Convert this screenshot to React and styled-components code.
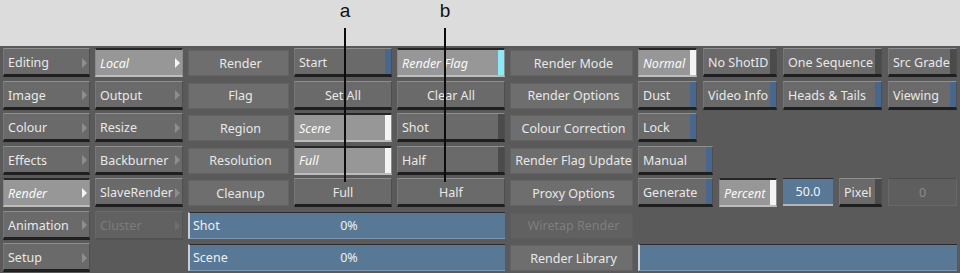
import React from "react";
import styled, { createGlobalStyle, css } from "styled-components";

const Global = createGlobalStyle`
  body { margin: 0; background: #dcdcdc; font-family: "Noto Sans", "DejaVu Sans", sans-serif; }
`;

const Page = styled.div`
  position: relative;
  width: 960px;
  height: 273px;
  display: flex;
  flex-direction: column;
  background: #dcdcdc;
  overflow: hidden;
`;

const Header = styled.div`
  height: 46px;
  flex: none;
`;

const Panel = styled.div`
  flex: 1;
  background: #5a5a5a;
  display: grid;
  grid-template-columns: 87px 88px 101px 98px 108px 123px 319px;
  grid-auto-rows: 30px;
  column-gap: 5px;
  row-gap: 2.5px;
  padding: 2px 3px 0;
`;

// callout letters + leader lines drawn over the screenshot
const Callout = styled.div`
  position: absolute;
  left: ${p => p.$x}px;
  top: 0;
  width: 2px;
  height: 182px;
  pointer-events: none;
`;

const CalloutLetter = styled.span`
  position: absolute;
  left: 50%;
  top: 1px;
  transform: translateX(-50%);
  font-family: "Liberation Sans", Arial, sans-serif;
  font-size: 19px;
  line-height: 20px;
  color: #111;
`;

const CalloutLine = styled.div`
  position: absolute;
  left: 0;
  top: 28px;
  bottom: 0;
  width: 2px;
  background: #0c0c0c;
`;

const looks = {
  raised: css`
    padding-top: 2px;
    background: #6a6a6a;
    border-top: 1px solid #8e8e8e;
    border-left: 1px solid #767676;
    border-right: 1px solid #4e4e4e;
    border-bottom: 3px solid #1f1f1f;
    color: #e8e8e8;
  `,
  pressed: css`
    padding-top: 1px;
    background: #979797;
    border-top: 2px solid #262626;
    border-left: 1px solid #8a8a8a;
    border-right: 1px solid #8a8a8a;
    border-bottom: 2px solid #bdbdbd;
    color: #fafafa;
    font-style: italic;
  `,
  dim: css`
    padding-top: 2px;
    background: #616161;
    border-top: 1px solid #6c6c6c;
    border-left: 1px solid #666;
    border-right: 1px solid #555;
    border-bottom: 2px solid #525252;
    color: #7c7c7c;
  `,
  flat: css`
    height: 26px;
    margin-top: 2px;
    background: #6e6e6e;
    border: 1px solid #636363;
    color: #e8e8e8;
    justify-content: center;
  `,
  flatOff: css`
    height: 26px;
    margin-top: 2px;
    background: #616161;
    border: 1px solid #5d5d5d;
    color: #7e7e7e;
    justify-content: center;
  `,
};

const Btn = styled.div`
  box-sizing: border-box;
  height: 29px;
  width: ${p => (p.$w ? `${p.$w}px` : "auto")};
  flex: none;
  display: flex;
  align-items: center;
  justify-content: ${p => (p.$center ? "center" : "flex-start")};
  padding-left: ${p => (p.$center ? 0 : 4)}px;
  font-size: 12.5px;
  white-space: nowrap;
  overflow: hidden;
  ${p => looks[p.$look || "raised"]}
`;

const Label = styled.span`
  flex: none;
`;

const Lamp = styled.span`
  align-self: stretch;
  width: 6px;
  flex: none;
  margin-left: auto;
  margin-top: -2px;
  background: ${p => p.$c};
`;

const Arrow = styled.span`
  flex: none;
  margin-left: auto;
  margin-right: 2px;
  width: 0;
  height: 0;
  border-top: 5px solid transparent;
  border-bottom: 5px solid transparent;
  border-left: 5px solid ${p => (p.$on ? "#f4f4f4" : p.$off ? "#6e6e6e" : "#8e8e8e")};
`;

const Bar = styled.div`
  grid-column: ${p => p.$cols};
  box-sizing: border-box;
  height: 27px;
  margin-top: 1px;
  display: grid;
  grid-template-columns: 1fr auto 1fr;
  align-items: center;
  padding-left: 3px;
  background: #587896;
  border-left: 2px solid #c9d0d6;
  border-top: 1px solid #2b2b2b;
  border-bottom: 1px solid #7f97ae;
  color: #eef0f2;
  font-size: 12.5px;
`;

const Field = styled.div`
  box-sizing: border-box;
  width: ${p => p.$w}px;
  flex: none;
  height: 28px;
  display: flex;
  align-items: center;
  justify-content: center;
  font-size: 12.5px;
  ${p =>
    p.$off
      ? css`
          background: #5e5e5e;
          border: 1px solid #686868;
          border-top-color: #4c4c4c;
          color: #8a8a8a;
        `
      : css`
          background: #587896;
          border-top: 1px solid #2b2b2b;
          border-bottom: 2px solid #b4b4b4;
          color: #f4f4f4;
        `}
`;

const Strip = styled.div`
  display: flex;
  gap: 6px;
  align-items: flex-start;
`;

const BLUE = "#47678f";
const DARK = "#4b4b4b";
const WHITE = "#f4f4f4";
const CYAN = "#8ceaf8";

function Menu({ children, on, off }) {
  return (
    <Btn $look={on ? "pressed" : off ? "dim" : "raised"}>
      <Label>{children}</Label>
      <Arrow $on={on} $off={off} />
    </Btn>
  );
}

function Toggle({ children, lamp, on, w }) {
  return (
    <Btn $look={on ? "pressed" : "raised"} $w={w}>
      <Label>{children}</Label>
      <Lamp $c={lamp} />
    </Btn>
  );
}

function Push({ children }) {
  return (
    <Btn $center>
      <Label>{children}</Label>
    </Btn>
  );
}

function Flat({ children, off }) {
  return <Btn $look={off ? "flatOff" : "flat"}>{children}</Btn>;
}

export default function App() {
  return (
    <Page>
      <Global />
      <Header />
      <Panel>
        {/* row 1 */}
        <Menu>Editing</Menu>
        <Menu on>Local</Menu>
        <Flat>Render</Flat>
        <Toggle lamp={BLUE}>Start</Toggle>
        <Toggle lamp={CYAN} on>Render Flag</Toggle>
        <Flat>Render Mode</Flat>
        <Strip>
          <Toggle lamp={WHITE} on w={59}>Normal</Toggle>
          <Toggle lamp={DARK} w={74}>No ShotID</Toggle>
          <Toggle lamp={DARK} w={99}>One Sequence</Toggle>
          <Toggle lamp={DARK} w={69}>Src Grade</Toggle>
        </Strip>

        {/* row 2 */}
        <Menu>Image</Menu>
        <Menu>Output</Menu>
        <Flat>Flag</Flat>
        <Push>Set All</Push>
        <Push>Clear All</Push>
        <Flat>Render Options</Flat>
        <Strip>
          <Toggle lamp={BLUE} w={59}>Dust</Toggle>
          <Toggle lamp={BLUE} w={74}>Video Info</Toggle>
          <Toggle lamp={BLUE} w={99}>Heads &amp; Tails</Toggle>
          <Toggle lamp={BLUE} w={69}>Viewing</Toggle>
        </Strip>

        {/* row 3 */}
        <Menu>Colour</Menu>
        <Menu>Resize</Menu>
        <Flat>Region</Flat>
        <Toggle lamp={WHITE} on>Scene</Toggle>
        <Toggle lamp={DARK}>Shot</Toggle>
        <Flat>Colour Correction</Flat>
        <Strip>
          <Toggle lamp={BLUE} w={59}>Lock</Toggle>
        </Strip>

        {/* row 4 */}
        <Menu>Effects</Menu>
        <Menu>Backburner</Menu>
        <Flat>Resolution</Flat>
        <Toggle lamp={WHITE} on>Full</Toggle>
        <Toggle lamp={DARK}>Half</Toggle>
        <Flat>Render Flag Update</Flat>
        <Strip>
          <Toggle lamp={BLUE} w={75}>Manual</Toggle>
        </Strip>

        {/* row 5 */}
        <Menu on>Render</Menu>
        <Menu>SlaveRender</Menu>
        <Flat>Cleanup</Flat>
        <Push>Full</Push>
        <Push>Half</Push>
        <Flat>Proxy Options</Flat>
        <Strip>
          <Toggle lamp={BLUE} w={75}>Generate</Toggle>
          <Toggle lamp={WHITE} on w={58}>Percent</Toggle>
          <Field $w={50}>50.0</Field>
          <Toggle lamp={DARK} w={43}>Pixel</Toggle>
          <Field $w={69} $off>0</Field>
        </Strip>

        {/* row 6 */}
        <Menu>Animation</Menu>
        <Menu off>Cluster</Menu>
        <Bar $cols="3 / span 3">
          <span>Shot</span>
          <span>0%</span>
        </Bar>
        <Flat off>Wiretap Render</Flat>
        <div />

        {/* row 7 */}
        <Menu>Setup</Menu>
        <div />
        <Bar $cols="3 / span 3">
          <span>Scene</span>
          <span>0%</span>
        </Bar>
        <Flat>Render Library</Flat>
        <Bar $cols="7" />
      </Panel>

      <Callout $x={344}>
        <CalloutLetter>a</CalloutLetter>
        <CalloutLine />
      </Callout>
      <Callout $x={444}>
        <CalloutLetter>b</CalloutLetter>
        <CalloutLine />
      </Callout>
    </Page>
  );
}
